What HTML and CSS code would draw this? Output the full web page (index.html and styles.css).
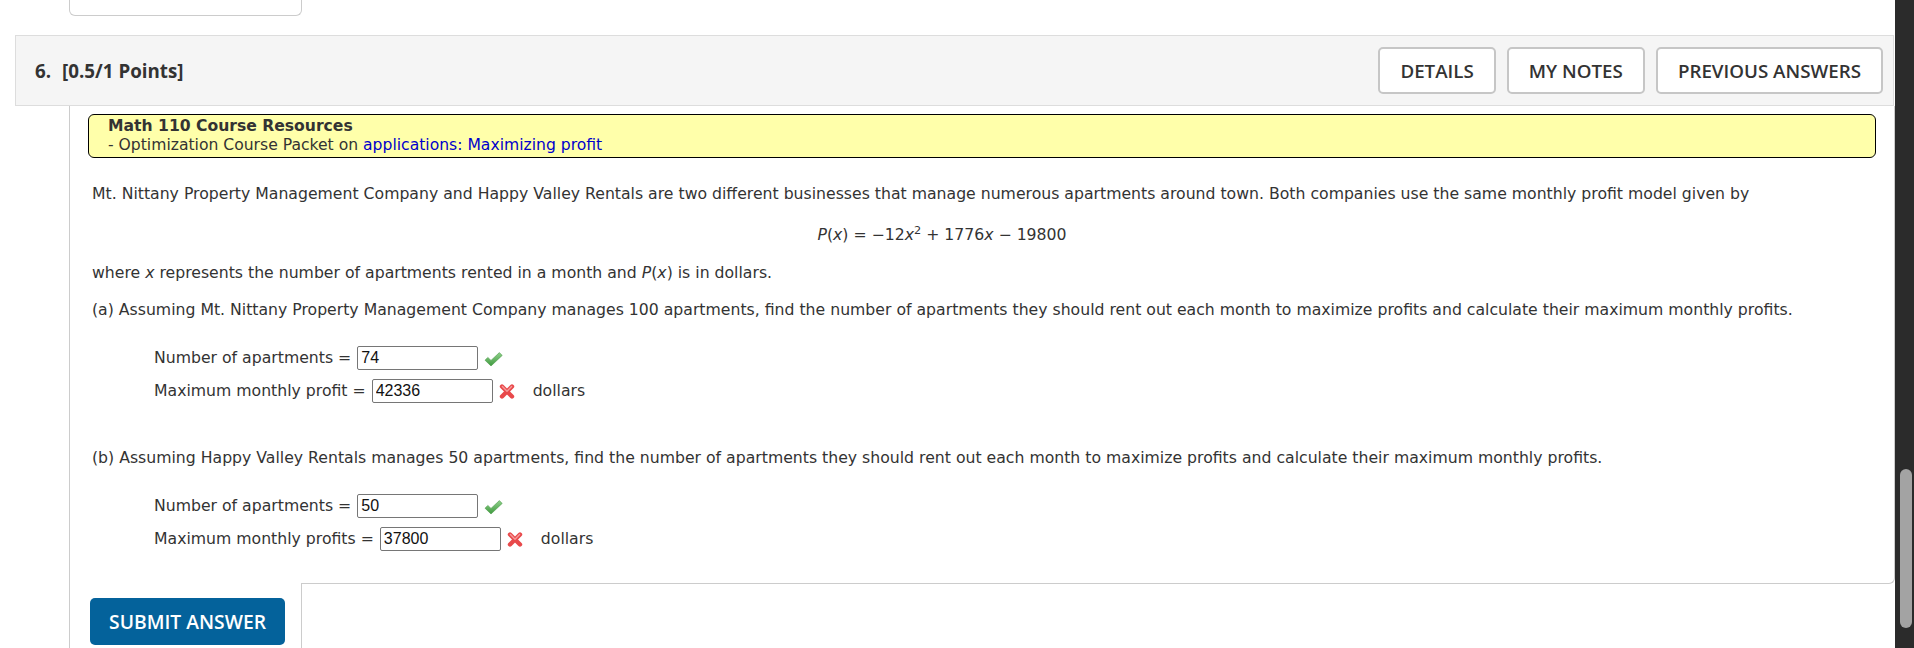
FILE: index.html
```html
<!DOCTYPE html>
<html lang="en">
<head>
<meta charset="utf-8">
<title>Question 6</title>
<link rel="stylesheet" href="styles.css">
</head>
<body>
<div class="page">
  <main class="main">
    <div class="prev-tab"></div>
    <section class="question">
      <header class="q-head">
        <h2 class="q-title">6.<span class="pts">[0.5/1 Points]</span></h2>
        <div class="q-actions">
          <button class="btn-outline">DETAILS</button>
          <button class="btn-outline">MY NOTES</button>
          <button class="btn-outline">PREVIOUS ANSWERS</button>
        </div>
      </header>
      <div class="q-body">
        <div class="resources">
          <div class="res-title">Math 110 Course Resources</div>
          <div class="res-line">- Optimization Course Packet on <a class="res-link" href="#">applications: Maximizing profit</a></div>
        </div>
        <div class="q-text">
          <p class="p1">Mt. Nittany Property Management Company and Happy Valley Rentals are two different businesses that manage numerous apartments around town. Both companies use the same monthly profit model given by</p>
          <p class="formula"><i>P</i>(<i>x</i>) = −12<i>x</i><sup>2</sup> + 1776<i>x</i> − 19800</p>
          <p class="p2">where <i>x</i> represents the number of apartments rented in a month and <i>P</i>(<i>x</i>) is in dollars.</p>
          <p class="p3">(a) Assuming Mt. Nittany Property Management Company manages 100 apartments, find the number of apartments they should rent out each month to maximize profits and calculate their maximum monthly profits.</p>
          <div class="answers">
            <div class="ans-row">
              <span class="lbl">Number of apartments =</span>
              <input class="ans" type="text" value="74" readonly>
              <svg class="ico-check" width="19" height="15" viewBox="0 0 19 15"><defs><linearGradient id="g1" x1="0" y1="0" x2="0" y2="1"><stop offset="0" stop-color="#8fd08a"/><stop offset="1" stop-color="#3f9a3f"/></linearGradient></defs><path d="M1 8.2 L3.8 5.4 L7 8.4 L15.4 0.6 L18.2 3.4 L7 14 Z" fill="url(#g1)" stroke="#4c9a4a" stroke-width="0.6" stroke-linejoin="round"/></svg>
            </div>
            <div class="ans-row">
              <span class="lbl">Maximum monthly profit =</span>
              <input class="ans" type="text" value="42336" readonly>
              <svg class="ico-x" width="16" height="17" viewBox="0 0 16 17"><path d="M3 3.5 L13 13.5 M13 3.5 L3 13.5" stroke="#e8494b" stroke-width="4.4" stroke-linecap="round"/><path d="M3.4 3.6 L8 8.2 M12.6 3.6 L8 8.2" stroke="#f59a9a" stroke-width="1.4" stroke-linecap="round"/></svg>
              <span class="unit">dollars</span>
            </div>
          </div>
          <p class="p4">(b) Assuming Happy Valley Rentals manages 50 apartments, find the number of apartments they should rent out each month to maximize profits and calculate their maximum monthly profits.</p>
          <div class="answers">
            <div class="ans-row">
              <span class="lbl">Number of apartments =</span>
              <input class="ans" type="text" value="50" readonly>
              <svg class="ico-check" width="19" height="15" viewBox="0 0 19 15"><defs><linearGradient id="g2" x1="0" y1="0" x2="0" y2="1"><stop offset="0" stop-color="#8fd08a"/><stop offset="1" stop-color="#3f9a3f"/></linearGradient></defs><path d="M1 8.2 L3.8 5.4 L7 8.4 L15.4 0.6 L18.2 3.4 L7 14 Z" fill="url(#g2)" stroke="#4c9a4a" stroke-width="0.6" stroke-linejoin="round"/></svg>
            </div>
            <div class="ans-row">
              <span class="lbl">Maximum monthly profits =</span>
              <input class="ans" type="text" value="37800" readonly>
              <svg class="ico-x" width="16" height="17" viewBox="0 0 16 17"><path d="M3 3.5 L13 13.5 M13 3.5 L3 13.5" stroke="#e8494b" stroke-width="4.4" stroke-linecap="round"/><path d="M3.4 3.6 L8 8.2 M12.6 3.6 L8 8.2" stroke="#f59a9a" stroke-width="1.4" stroke-linecap="round"/></svg>
              <span class="unit">dollars</span>
            </div>
          </div>
        </div>
      </div>
      <div class="q-tab">
        <button class="submit">SUBMIT ANSWER</button>
      </div>
    </section>
  </main>
  <div class="scrollbar"><div class="thumb"></div></div>
</div>
</body>
</html>
```

FILE: styles.css
```css
html, body {
  margin: 0;
  padding: 0;
  height: 100%;
  overflow: hidden;
  background: #fff;
}

body {
  font-family: "DejaVu Sans", Verdana, sans-serif;
  color: #333;
}

.page {
  display: flex;
  height: 648px;
}

.main {
  flex: 1;
  min-width: 0;
  overflow: hidden;
}

.scrollbar {
  width: 19px;
  flex: none;
  background: #2b2b2b;
}

.thumb {
  margin: 469px 2px 0 5px;
  height: 159px;
  background: #a3a3a3;
  border-radius: 6px;
}

.prev-tab {
  margin-left: 69px;
  width: 231px;
  height: 15px;
  border: 1px solid #ccc;
  border-top: none;
  border-radius: 0 0 6px 6px;
}

.question {
  margin-top: 19px;
}

.q-head {
  margin-left: 15px;
  margin-right: 1px;
  height: 69px;
  border: 1px solid #ddd;
  background: #f5f5f5;
  display: flex;
  align-items: center;
  justify-content: space-between;
  padding: 0 10px 0 19px;
}

.q-title {
  margin: 0;
  font-family: "Open Sans", sans-serif;
  font-weight: 700;
  font-size: 18.75px;
  color: #333;
}

.pts {
  margin-left: 11px;
}

.q-actions {
  display: flex;
  gap: 11px;
}

.btn-outline {
  height: 47px;
  padding: 0 20px;
  border: 2px solid #c6c6c6;
  border-radius: 5px;
  background: #fff;
  font-family: "Open Sans", sans-serif;
  font-weight: 600;
  font-size: 18.75px;
  color: #333;
}

.q-body {
  margin-left: 69px;
  border: 1px solid #ccc;
  border-top: none;
  border-radius: 0 0 6px 0;
  padding: 8px 18px 32px;
}

.resources {
  background: #ffffaa;
  border: 1px solid #000;
  border-radius: 6px;
  padding: 2px 18px 2px 19px;
  font-size: 15.6px;
  line-height: 19px;
}

.res-title {
  font-weight: 700;
}

.res-link {
  color: #0000cc;
  text-decoration: none;
}

.q-text {
  padding: 0 4px;
  font-size: 15.7px;
  line-height: 22px;
}

.q-text p {
  margin: 0;
}

.q-text .p1 {
  margin-top: 25px;
}

.q-text .formula {
  margin-top: 19px;
  width: 1700px;
  text-align: center;
}

.formula sup {
  font-size: 0.72em;
  line-height: 0;
  vertical-align: 0.5em;
}

.q-text .p2 {
  margin-top: 16px;
}

.q-text .p3 {
  margin-top: 15px;
}

.answers {
  margin-top: 25px;
  margin-left: 62px;
  display: flex;
  flex-direction: column;
  gap: 9px;
}

.q-text .p4 {
  margin-top: 44px;
}

.ans-row {
  display: flex;
  align-items: center;
  height: 24px;
}

.lbl {
  white-space: nowrap;
}

.ans {
  box-sizing: border-box;
  width: 121px;
  height: 24px;
  margin: 0 0 0 6px;
  padding: 0 3px;
  border: 1px solid #767676;
  border-radius: 2px;
  font-family: "Liberation Sans", Arial, sans-serif;
  font-size: 16px;
  color: #111;
  background: #fff;
}

.ico-check {
  margin-left: 6px;
  margin-top: 3px;
}

.ico-x {
  margin-left: 6px;
  margin-top: 1px;
}

.unit {
  margin-left: 18px;
}

.q-tab {
  position: relative;
  margin-left: 69px;
  margin-top: -1px;
  width: 211px;
  height: 80px;
  padding: 15px 0 0 20px;
  background: #fff;
  border: 1px solid #ccc;
  border-top: none;
}

.submit {
  width: 195px;
  height: 47px;
  border: none;
  border-radius: 5px;
  background: #04629b;
  color: #fff;
  font-family: "Open Sans", sans-serif;
  font-weight: 600;
  font-size: 19.3px;
  padding: 0;
}
```
